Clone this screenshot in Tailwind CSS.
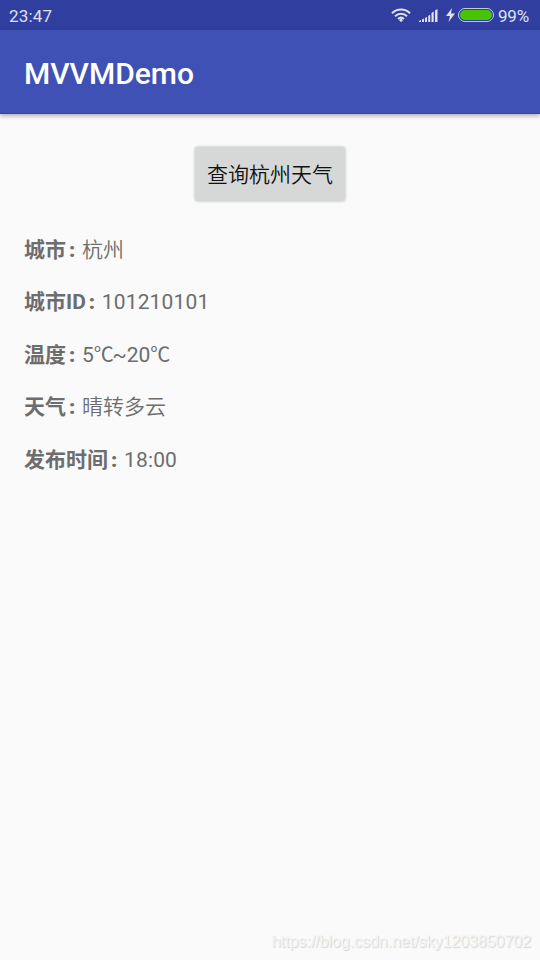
<!DOCTYPE html>
<html lang="zh-CN">
<head>
  <meta charset="UTF-8" />
  <title>MVVMDemo</title>
  <script src="https://cdn.jsdelivr.net/npm/@tailwindcss/browser@4"></script>
</head>
<body class="bg-[#fafafa] font-[Roboto,'Noto_Sans_CJK_SC',sans-serif]">
  <div class="w-[540px] h-[960px] flex flex-col overflow-hidden">
    <!-- status bar -->
    <div class="h-[30px] shrink-0 bg-[#303f9f] flex items-center px-[9px] text-[#dfe1f1]">
      <span class="flex-1 text-[17px] tracking-[0.2px] leading-[30px] pt-px">23:47</span>
      <svg class="w-5 h-[14px] mr-2" viewBox="0 0 20 14" fill="none" stroke="#dfe1f1" stroke-width="2">
        <path d="M1 5.200C6 .2 14 .2 19 5.200M4 8.200c3.400-3.200 8.600-3.200 12 0M7 11c1.800-1.600 4.200-1.600 6 0" />
        <circle cx="10" cy="12.300" r="1.500" fill="#dfe1f1" stroke="none" />
      </svg>
      <svg class="w-[19px] h-[13px] mr-2" viewBox="0 0 19 13" fill="#dfe1f1">
        <path d="M0 12l2-1v2H0zM3 10.500l2-1V13H3zM6 9l2-1v5H6zM9.200 7l2-1.500V13h-2zM12.500 4l2.200-1.500V13h-2.200zM16 1.500L18.500 0v13H16z" />
      </svg>
      <svg class="w-[9px] h-[14px] mr-[3px]" viewBox="0 0 9 14" fill="#dfe1f1">
        <path d="M6 0L0 8h4L2.500 14 9 5.500H5z" />
      </svg>
      <div class="w-9 h-[14px] rounded-full border border-[#c3c7e3] p-px mr-1">
        <div class="h-full rounded-full bg-[#46c400]"></div>
      </div>
      <span class="w-[33px] text-[17px] tracking-[-0.2px] leading-[30px] pt-px">99%</span>
    </div>

    <!-- toolbar -->
    <div class="h-[84px] shrink-0 bg-[#3f51b5] border-b border-[#3546a0] flex items-center px-6 shadow-[0_2px_4px_rgba(0,0,0,0.3)]">
      <h1 class="text-white text-[30px] font-medium pt-[3px]">MVVMDemo</h1>
    </div>

    <!-- content -->
    <div class="flex-1 flex flex-col px-6 pt-[33px]">
      <button class="self-center w-[150px] h-[54px] pt-1 rounded-[3px] bg-[#d6d7d7] text-[21px] font-[350] text-[#111111] shadow-[0_0_3px_rgba(0,0,0,0.3)]">查询杭州天气</button>

      <div class="mt-[23px] text-[21px] text-[#6d6d6d]">
        <p class="h-[52.5px] flex items-center"><b>城市</b><b class="w-4 pl-[3px] font-black">:</b><span class="font-[350]">杭州</span></p>
        <p class="h-[52.5px] flex items-center"><b>城市ID</b><b class="w-4 pl-[3px] font-black">:</b><span class="tracking-[0.15px]">101210101</span></p>
        <p class="h-[52.5px] flex items-center"><b>温度</b><b class="w-4 pl-[3px] font-black">:</b><span>5<span class="text-[20px] tracking-[-1.4px]">℃</span>~20<span class="text-[20px]">℃</span></span></p>
        <p class="h-[52.5px] flex items-center"><b>天气</b><b class="w-4 pl-[3px] font-black">:</b><span class="font-[350]">晴转多云</span></p>
        <p class="h-[52.5px] flex items-center"><b>发布时间</b><b class="w-4 pl-[3px] font-black">:</b><span class="tracking-[0.15px]">18:00</span></p>
      </div>

      <p class="mt-auto mb-[6px] -mr-[15px] self-end font-['Liberation_Sans',sans-serif] text-base tracking-[-0.04px] text-[#f4f4f4] [text-shadow:1px_1px_1px_#d4d4d4]">https://blog.csdn.net/sky1203850702</p>
    </div>
  </div>
</body>
</html>
